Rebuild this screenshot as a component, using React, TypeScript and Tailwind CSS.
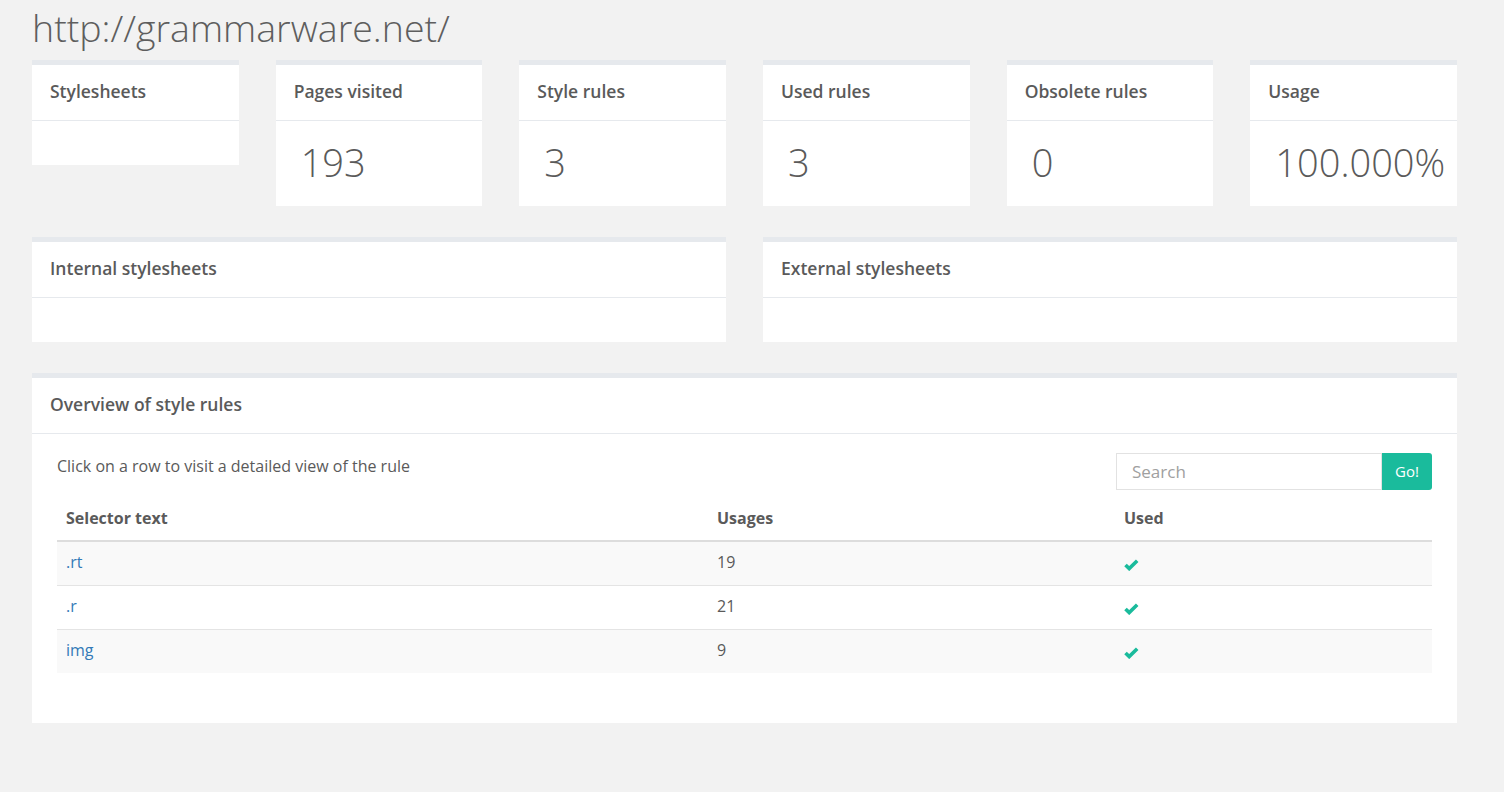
import React from "react";

const stats = [
  { title: "Stylesheets", value: null },
  { title: "Pages visited", value: "193" },
  { title: "Style rules", value: "3" },
  { title: "Used rules", value: "3" },
  { title: "Obsolete rules", value: "0" },
  { title: "Usage", value: "100.000%" },
];

const rules = [
  { selector: ".rt", usages: 19 },
  { selector: ".r", usages: 21 },
  { selector: "img", usages: 9 },
];

const Check = () => (
  <svg width="15" height="12" viewBox="0 0 15 12" className="inline-block">
    <path d="M1.5 6 L5.2 9.6 L13.2 1.8" stroke="#1ABB9C" strokeWidth="3.6" fill="none" strokeLinejoin="miter" />
  </svg>
);

const PanelHeader = ({ title }: { title: string }) => (
  <div className="h-[56px] flex items-center px-[18px] pb-[3px] border-b border-[#e6e9ed]">
    <h2 className="text-[17.5px] font-semibold text-[#5a5a5a]">{title}</h2>
  </div>
);

const App = () => {
  return (
    <div
      className="min-h-[792px] bg-[#f2f2f2] px-[32px] pt-[4px] pb-10 text-[#5a5a5a]"
      style={{ fontFamily: '"Open Sans", sans-serif' }}
    >
      <h1 className="text-[37.5px] font-light leading-[48px] mb-[8px] text-[#5e5e5e]">http://grammarware.net/</h1>

      <div className="grid grid-cols-6 gap-[37px] w-[1425px] items-start">
        {stats.map((s) => (
          <div key={s.title} className="bg-white border-t-[5px] border-[#e6e9ed]">
            <PanelHeader title={s.title} />
            {s.value === null ? (
              <div className="h-[44px]" />
            ) : (
              <div className="h-[85px] flex items-center pl-[25px] pb-[2px] text-[38px] font-light text-[#5a5a5a]">
                {s.value}
              </div>
            )}
          </div>
        ))}
      </div>

      <div className="grid grid-cols-2 gap-[37px] w-[1425px] mt-[31px]">
        {["Internal stylesheets", "External stylesheets"].map((t) => (
          <div key={t} className="bg-white border-t-[5px] border-[#e6e9ed]">
            <PanelHeader title={t} />
            <div className="h-[44px]" />
          </div>
        ))}
      </div>

      <div className="w-[1425px] mt-[31px] bg-white border-t-[5px] border-[#e6e9ed]">
        <PanelHeader title="Overview of style rules" />
        <div className="px-[25px] pt-[19px] pb-[50px]">
          <div className="flex justify-between items-start">
            <p className="text-[16px] mt-[1px]">Click on a row to visit a detailed view of the rule</p>
            <div className="flex h-[37px]">
              <input
                placeholder="Search"
                className="w-[266px] h-[37px] border border-[#e2e2e2] px-[15px] text-[17px] placeholder-[#a0a0a0] outline-none"
              />
              <button className="w-[50px] h-[37px] bg-[#1ABB9C] text-white text-[15px] rounded-r-[3px]">Go!</button>
            </div>
          </div>

          <table className="w-full mt-[6px] text-[16px] border-collapse">
            <thead>
              <tr className="border-b-2 border-[#dddddd]">
                <th className="w-[651px] text-left font-bold px-[9px] h-[45px]">Selector text</th>
                <th className="w-[407px] text-left font-bold px-[9px]">Usages</th>
                <th className="text-left font-bold px-[9px]">Used</th>
              </tr>
            </thead>
            <tbody>
              {rules.map((r, i) => (
                <tr key={r.selector} className={`border-t border-[#e4e4e4] h-[44px] ${i % 2 === 0 ? "bg-[#f9f9f9]" : "bg-white"}`}>
                  <td className="px-[9px] pb-[2px] text-[#337ab7]">{r.selector}</td>
                  <td className="px-[9px] pb-[2px]">{r.usages}</td>
                  <td className="px-[9px]">
                    <Check />
                  </td>
                </tr>
              ))}
            </tbody>
          </table>
        </div>
      </div>
    </div>
  );
};

export default App;
